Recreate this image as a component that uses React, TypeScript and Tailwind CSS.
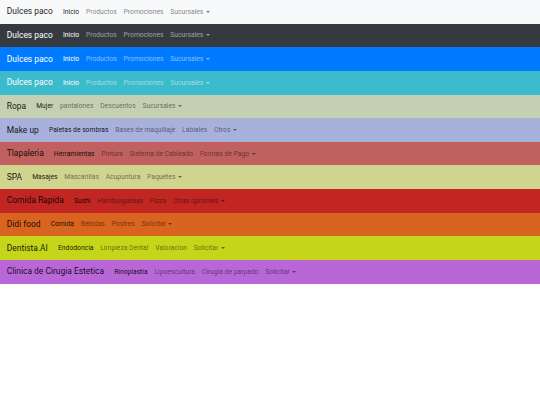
import React from "react";

type Bar = {
  brand: string;
  links: string[];
  drop: string;
  bg: string;
  dark?: boolean;
};

const bars: Bar[] = [
  { brand: "Dulces paco", links: ["Inicio", "Productos", "Promociones"], drop: "Sucursales", bg: "bg-[#f8f9fa]" },
  { brand: "Dulces paco", links: ["Inicio", "Productos", "Promociones"], drop: "Sucursales", bg: "bg-[#343a40]", dark: true },
  { brand: "Dulces paco", links: ["Inicio", "Productos", "Promociones"], drop: "Sucursales", bg: "bg-[#007bff]", dark: true },
  { brand: "Dulces paco", links: ["Inicio", "Productos", "Promociones"], drop: "Sucursales", bg: "bg-[#3bbbcb]", dark: true },
  { brand: "Ropa", links: ["Mujer", "pantalones", "Descuentos"], drop: "Sucursales", bg: "bg-[#c5d0b3]" },
  { brand: "Make up", links: ["Paletas de sombras", "Bases de maquillaje", "Labiales"], drop: "Otros", bg: "bg-[#a7b1dc]" },
  { brand: "Tlapaleria", links: ["Herramientas", "Pintura", "Sistema de Cableado"], drop: "Formas de Pago", bg: "bg-[#c0605f]" },
  { brand: "SPA", links: ["Masajes", "Mascarillas", "Acupuntura"], drop: "Paquetes", bg: "bg-[#cfd48f]" },
  { brand: "Comida Rapida", links: ["Sushi", "Hamburguesas", "Pizza"], drop: "Otras opciones", bg: "bg-[#c12622]" },
  { brand: "Didi food", links: ["Comida", "Bebidas", "Postres"], drop: "Solicitar", bg: "bg-[#d9641f]" },
  { brand: "Dentista.AI", links: ["Endodoncia", "Limpieza Dental", "Valoracion"], drop: "Solicitar", bg: "bg-[#c5d61a]" },
  { brand: "Clinica de Cirugia Estetica", links: ["Rinoplastia", "Lipoescultura", "Cirugia de parpado"], drop: "Solicitar", bg: "bg-[#b967d8]" },
];

function Navbar({ bar }: { bar: Bar }) {
  const brandC = bar.dark ? "text-white" : "text-black/90";
  const activeC = bar.dark ? "text-white" : "text-black/90";
  const linkC = bar.dark ? "text-white/50" : "text-black/50";
  return (
    <nav className={`flex items-center px-[6.75px] py-[3.375px] ${bar.bg}`}>
      <a className={`py-[2.1px] mr-[6.75px] text-[8.44px] leading-[1.5] whitespace-nowrap ${brandC}`}>{bar.brand}</a>
      <ul className="flex items-center">
        {bar.links.map((l, i) => (
          <li key={l}>
            <a className={`block px-[3.375px] py-[3.375px] text-[6.75px] leading-[1.5] whitespace-nowrap ${i === 0 ? activeC : linkC}`}>
              {l}
            </a>
          </li>
        ))}
        <li>
          <a className={`flex items-center px-[3.375px] py-[3.375px] text-[6.75px] leading-[1.5] whitespace-nowrap ${linkC}`}>
            {bar.drop}
            <span className="inline-block ml-[2.6px] border-t-[2px] border-x-[2px] border-x-transparent border-t-current" />
          </a>
        </li>
      </ul>
    </nav>
  );
}

export default function App() {
  return (
    <div className="w-[540px] h-[405px] bg-white font-['Roboto','Liberation_Sans',sans-serif]">
      {bars.map((b, i) => (
        <Navbar key={i} bar={b} />
      ))}
    </div>
  );
}
